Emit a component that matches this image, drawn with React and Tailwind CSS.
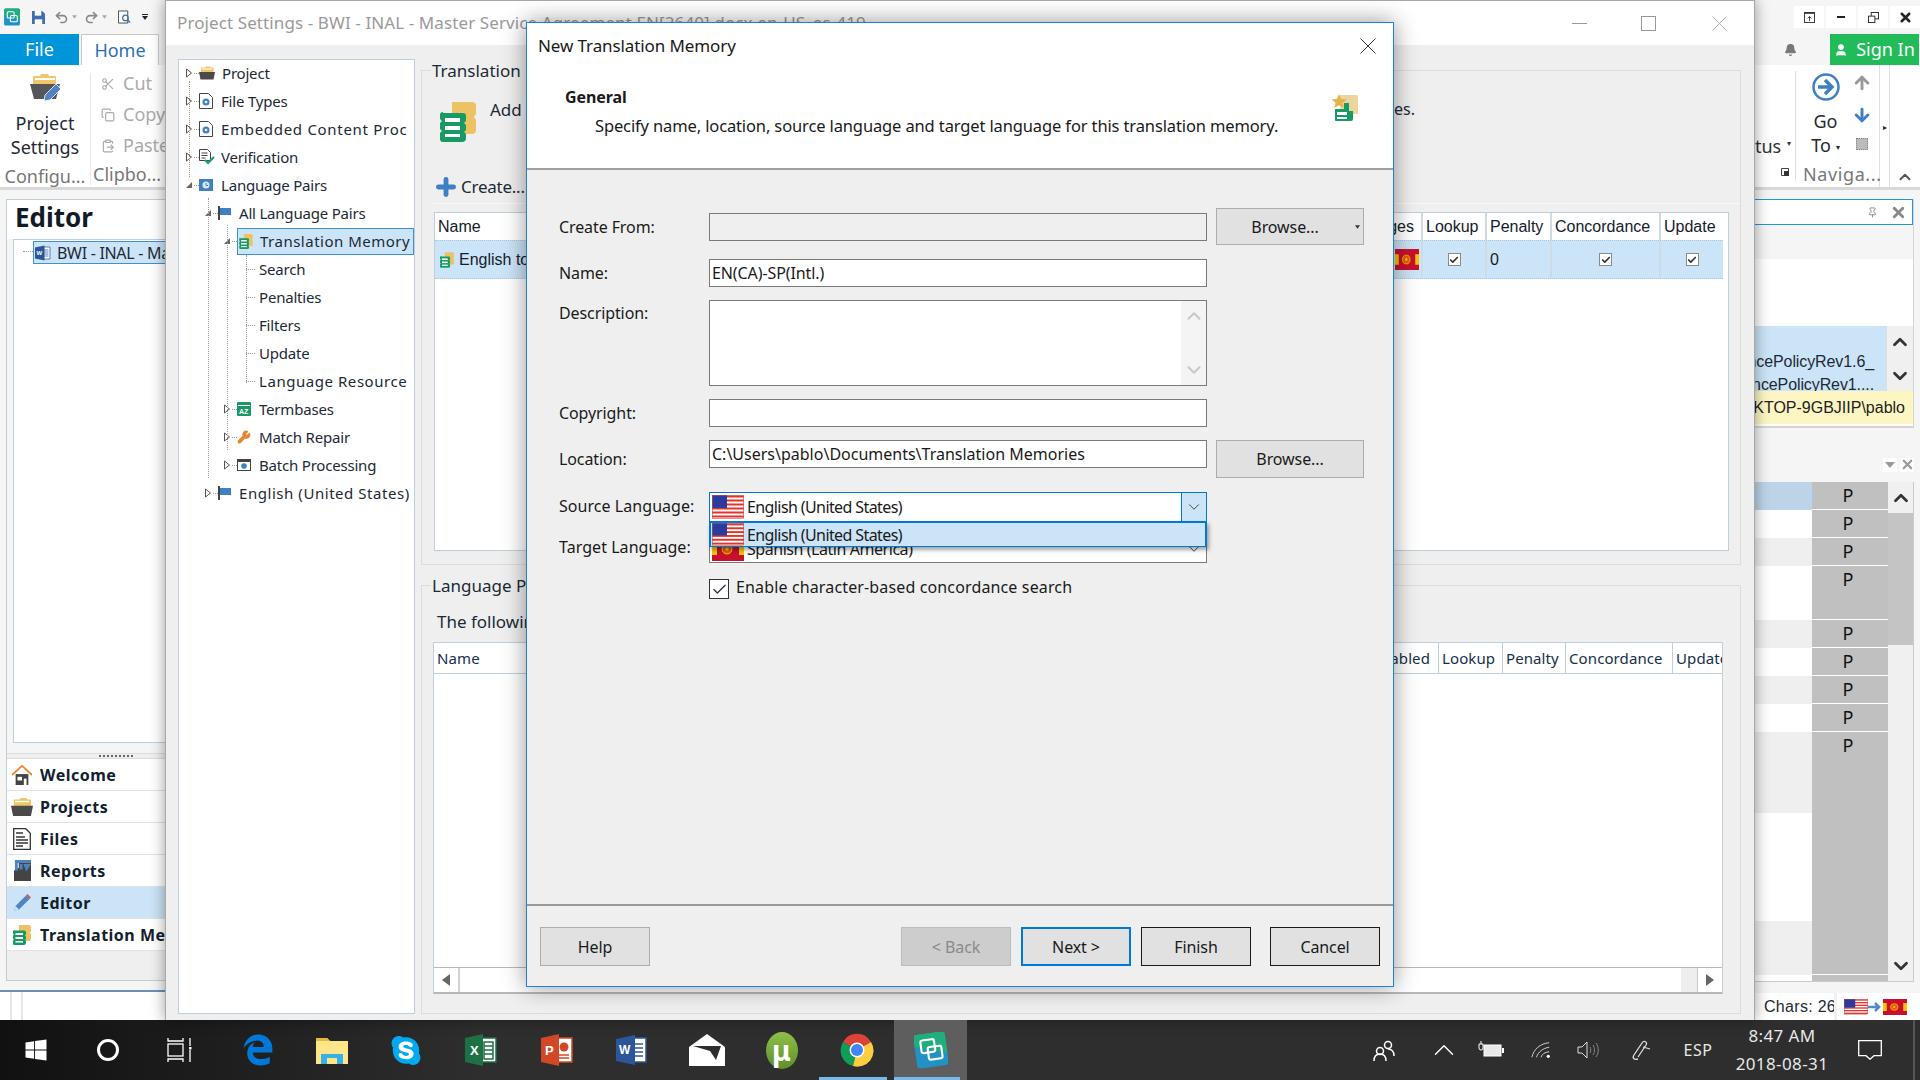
import { Scissors, Copy, ClipboardPaste, Plus, ChevronUp, ChevronDown, Pin, Bell, User, ArrowUp, ArrowDown, Check, Wrench, Undo2, Redo2, X } from 'lucide-react'
import { FaWindows, FaEdgeLegacy, FaSkype } from 'react-icons/fa'

const UsFlag = ({ className = 'w-[32px] h-[24px]' }) => (
  <svg viewBox="0 0 32 24" preserveAspectRatio="none" className={className}>
    <rect width="32" height="24" fill="#fff" />
    {[0, 4, 8, 12, 16, 20].map((y) => <rect key={y} y={y + 0.5} width="32" height="2" fill="#e6332a" />)}
    <rect width="15" height="13" fill="#2b3a9e" />
    <rect x="0.5" y="0.5" width="31" height="23" fill="none" stroke="#c05050" strokeWidth="0.6" />
  </svg>
)

const EsFlag = ({ className = 'w-[32px] h-[24px]' }) => (
  <svg viewBox="0 0 32 24" preserveAspectRatio="none" className={className}>
    <rect width="32" height="24" fill="#c8102e" />
    <rect x="27" y="6" width="5" height="12" fill="#f5c400" />
    <rect x="0" y="6" width="5" height="12" fill="#f5c400" />
    <circle cx="15" cy="12" r="5" fill="#e8590c" stroke="#f5c400" strokeWidth="1" />
    <circle cx="15" cy="12" r="1.6" fill="#f5c400" />
  </svg>
)

const TmIcon = ({ className = 'w-[16px] h-[16px]' }) => (
  <svg viewBox="0 0 36 40" className={className}>
    <path d="M12 0h20a4 4 0 0 1 4 4v8l-2 3 2 3v10a4 4 0 0 1-4 4H12z" fill="#edc264" />
    <path d="M3 11h20a3 3 0 0 1 3 3v5l-2 2 2 2v5l-2 2 2 2v4a4 4 0 0 1-4 4H3a3 3 0 0 1-3-3v-6l2-2-2-2v-6l2-2-2-2v-4a3 3 0 0 1 3-3z" fill="#179a63" />
    <rect x="5" y="16" width="15" height="4" fill="#fff" />
    <rect x="5" y="24" width="15" height="4" fill="#fff" />
    <rect x="5" y="32" width="15" height="3" fill="#fff" />
  </svg>
)

const NewTmIcon = () => (
  <svg viewBox="0 0 26 28" className="w-[26px] h-[28px]">
    <path d="M8 1h16a2 2 0 0 1 2 2v17H8z" fill="#ecd59a" />
    <path d="M7 0l2.200 5 5.300.4-4 3.500 1.300 5.200L7 11.300 2.200 14l1.300-5.200-4-3.500 5.300-.4z" fill="#e4b24c" />
    <path d="M12 9h5v8h4v8a2 2 0 0 1-2 2H4a1 1 0 0 1-1-1V15h9z" fill="#179a63" />
    <rect x="5" y="18" width="10" height="3" fill="#fff" />
    <rect x="5" y="23" width="10" height="2" fill="#fff" />
  </svg>
)

const FolderIcon = ({ className }) => (
  <svg viewBox="0 0 32 26" className={className}>
    <path d="M4 2h8l2-2h8l2 2h5v12H4z" fill="#f0c668" />
    <rect x="6" y="4" width="20" height="2" fill="#fff" />
    <path d="M0 11h32l-3 15H3z" fill="#4a4a4a" />
  </svg>
)

const ProjectIcon = ({ className }) => (
  <svg viewBox="0 0 30 30" className={className}>
    <path d="M3 3h7l1-2h7l1 2h7v12H3z" fill="#f0c668" />
    <rect x="5" y="5" width="20" height="2" fill="#fff" />
    <path d="M0 11h30l-4 15H4z" fill="#55555a" />
    <path d="M14 28l1-6 11-11 5 5-11 11z" fill="#4f83c3" stroke="#fff" strokeWidth="0.8" />
  </svg>
)

const PencilBlue = ({ className }) => (
  <svg viewBox="0 0 20 20" className={className}>
    <path d="M2 18l1.500-5L14 2.500 17.500 6 7 16.500z" fill="#4f83c3" />
    <path d="M14 2.500l1.500-1.500 3.500 3.500L17.500 6z" fill="#d9534f" />
    <path d="M3.500 13L7 16.500 2 18z" fill="#cfe0f2" />
  </svg>
)

const PageGear = ({ className = 'w-[14px] h-[16px]' }) => (
  <svg viewBox="0 0 14 16" className={className}>
    <path d="M.5.500h9l4 4v11H.5z" fill="#fff" stroke="#444" />
    <circle cx="7" cy="9" r="3.500" fill="#3f7fc4" />
    <circle cx="7" cy="9" r="1.300" fill="#fff" />
  </svg>
)

const VerifyIcon = () => (
  <svg viewBox="0 0 16 16" className="w-[16px] h-[16px]">
    <path d="M.5.500h8l3 3v8H.5z" fill="#fff" stroke="#444" />
    <path d="M2.500 4h6M2.500 6.500h6M2.500 9h4" stroke="#444" />
    <path d="M6 11l3 3 6-6" fill="none" stroke="#1aa06d" strokeWidth="2.200" />
  </svg>
)

const LangPairsIcon = () => (
  <svg viewBox="0 0 14 12" className="w-[14px] h-[12px]">
    <rect width="14" height="12" fill="#3f7fc4" />
    <circle cx="7" cy="6" r="3.500" fill="#dbe9f6" />
    <path d="M7 4v2.500h2" stroke="#3f7fc4" fill="none" />
  </svg>
)

const FlagPole = () => (
  <svg viewBox="0 0 14 14" className="w-[14px] h-[14px]">
    <rect x="0" y="0" width="2" height="14" fill="#444" />
    <path d="M2 2h11v7H2z" fill="#3f7fc4" />
  </svg>
)

const TermIcon = () => (
  <svg viewBox="0 0 14 14" className="w-[14px] h-[14px]">
    <rect width="14" height="14" rx="1" fill="#179a63" />
    <rect x="1" y="3" width="12" height="1" fill="#fff" />
    <text x="2" y="12" fontSize="7" fill="#fff" fontFamily="Liberation Sans" fontWeight="700">AZ</text>
  </svg>
)

const BatchIcon = () => (
  <svg viewBox="0 0 14 12" className="w-[14px] h-[12px]">
    <rect x=".5" y=".5" width="13" height="11" fill="#fff" stroke="#444" />
    <rect x=".5" y=".5" width="13" height="2.500" fill="#444" />
    <circle cx="7" cy="7" r="2.800" fill="#3f7fc4" />
  </svg>
)

const WordDoc = ({ className }) => (
  <svg viewBox="0 0 32 32" className={className}>
    <path d="M14 4h16v24H14z" fill="#fff" stroke="#2b579a" strokeWidth="1.500" />
    <path d="M18 10h9M18 14h9M18 18h9M18 22h9" stroke="#2b579a" strokeWidth="1.500" />
    <path d="M0 5l19-4v30L0 27z" fill="#2b579a" />
    <text x="3" y="20" fontSize="12" fontWeight="700" fill="#fff" fontFamily="Liberation Sans">W</text>
  </svg>
)

const StudioLogo = ({ className, tilt = false }) => (
  <svg viewBox="0 0 32 34" className={className}>
    <g transform={tilt ? 'rotate(-8 16 17)' : undefined}>
      <rect x="1" y="1" width="30" height="32" rx="3" fill="#2192c6" />
      <path d="M4 1h24a3 3 0 0 1 3 3v18L1 12V4a3 3 0 0 1 3-3z" fill="#1fae7c" />
      <rect x="7" y="7" width="13" height="12" rx="2" fill="none" stroke="#fff" strokeWidth="2" />
      <rect x="13" y="14" width="13" height="12" rx="2" fill="none" stroke="#fff" strokeWidth="2" />
    </g>
  </svg>
)

const Cross = ({ className, color = '#333' }) => (
  <svg viewBox="0 0 16 16" className={className}>
    <path d="M.5.500l15 15M15.500.500l-15 15" stroke={color} strokeWidth="1" />
  </svg>
)

const Exp = ({ open }) => (
  <svg viewBox="0 0 8 10" className="w-[8px] h-[10px] shrink-0">
    {open ? <path d="M7 2v6H1z" fill="#666" /> : <path d="M1.500 1l5 4-5 4z" fill="#fff" stroke="#555" />}
  </svg>
)

const treeRows = [
  { pad: 'pl-[6px]', exp: 'closed', icon: <FolderIcon className="w-[16px] h-[14px]" />, label: 'Project', gap: 'ml-[7px]' },
  { pad: 'pl-[6px]', exp: 'closed', icon: <PageGear />, label: 'File Types', gap: 'ml-[8px]' },
  { pad: 'pl-[6px]', exp: 'closed', icon: <PageGear />, label: 'Embedded Content Proc', gap: 'ml-[8px]', wide: 'tracking-[0.7px]' },
  { pad: 'pl-[6px]', exp: 'closed', icon: <VerifyIcon />, label: 'Verification', gap: 'ml-[6px]' },
  { pad: 'pl-[6px]', exp: 'open', icon: <LangPairsIcon />, label: 'Language Pairs', gap: 'ml-[8px]' },
  { pad: 'pl-[25px]', exp: 'open', icon: <FlagPole />, label: 'All Language Pairs', gap: 'ml-[7px]' },
  { pad: 'pl-[44px]', exp: 'open', icon: <TmIcon className="w-[14px] h-[15px]" />, label: 'Translation Memory', gap: 'ml-[7px]', selected: true, wide: 'tracking-[0.5px]' },
  { pad: 'pl-[63px]', label: 'Search' },
  { pad: 'pl-[63px]', label: 'Penalties' },
  { pad: 'pl-[63px]', label: 'Filters' },
  { pad: 'pl-[63px]', label: 'Update' },
  { pad: 'pl-[63px]', label: 'Language Resource', wide: 'tracking-[0.55px]' },
  { pad: 'pl-[44px]', exp: 'closed', icon: <TermIcon />, label: 'Termbases', gap: 'ml-[8px]' },
  { pad: 'pl-[44px]', exp: 'closed', icon: <Wrench className="w-[14px] h-[14px] text-[#e8862e] fill-[#e8862e]" />, label: 'Match Repair', gap: 'ml-[8px]' },
  { pad: 'pl-[44px]', exp: 'closed', icon: <BatchIcon />, label: 'Batch Processing', gap: 'ml-[8px]' },
  { pad: 'pl-[25px]', exp: 'closed', icon: <FlagPole />, label: 'English (United States)', gap: 'ml-[7px]', wide: 'tracking-[0.55px]' },
]

const TreeRow = ({ pad, exp, icon, label, gap, selected, wide = 'tracking-[-0.2px]' }) => {
  if (!exp) {
    return (
      <div className={`flex items-center h-[28px] ${pad} relative`}>
        <div className="absolute left-[67px] w-[9px] border-t border-dotted border-[#999]" />
        <span className={`ml-[17px] whitespace-nowrap ${wide}`}>{label}</span>
      </div>
    )
  }
  return (
    <div className={`flex items-center h-[28px] ${pad}`}>
      <Exp open={exp === 'open'} />
      <div className="w-[5px] ml-[1px] border-t border-dotted border-[#999]" />
      {selected ? (
        <div className="flex-1 flex items-center h-[27px] bg-[#cce4f7] border border-[#3d8fd6] pl-[1px]">
          {icon}
          <span className={`${gap} whitespace-nowrap ${wide}`}>{label}</span>
        </div>
      ) : (
        <>
          {icon}
          <span className={`${gap} whitespace-nowrap ${wide}`}>{label}</span>
        </>
      )}
    </div>
  )
}

const BlueCheck = () => (
  <div className="w-[13px] h-[13px] border border-[#8a8a8a] bg-white flex items-center justify-center">
    <Check className="w-[10px] h-[10px] text-[#333]" strokeWidth={4} />
  </div>
)

const TopCell = ({ w, children, center }) => (
  <div className={`${w} shrink-0 border-l-2 border-[#cfdbe3] flex items-center ${center ? 'justify-center' : 'pl-[3px]'}`}>{children}</div>
)

const BottomCell = ({ w, children }) => (
  <div className={`${w} shrink-0 border-l border-[#bfd0dc] pl-[3px] flex items-center overflow-hidden whitespace-nowrap`}>{children}</div>
)

const ProjectSettings = () => (
  <div className="absolute left-[165px] top-0 w-[1590px] h-[1020px] flex flex-col border-l border-t border-r border-[#a8a8a8] bg-[#efefef] shadow-[0_0_14px_rgba(0,0,0,0.4)] text-[#1d2a35]">
    <div className="h-[44px] shrink-0 bg-white flex items-center justify-between pl-[11px] pr-[27px]">
      <span className="text-[17px] tracking-[0.1px] text-[#9a9a9a] whitespace-nowrap">Project Settings - BWI - INAL - Master Service Agreement EN[2640].docx.en-US_es-419</span>
      <div className="flex items-center">
        <div className="w-[15px] border-t border-[#999]" />
        <div className="w-[15px] h-[15px] border border-[#999] ml-[54px]" />
        <Cross className="w-[15px] h-[15px] ml-[56px]" color="#aaa" />
      </div>
    </div>
    <div className="flex-1 flex pl-[12px] pt-[14px] pb-[6px] pr-[13px] gap-[6px]">
      <div className="relative w-[237px] h-[955px] bg-white border border-[#bfd0dc] text-[15px] overflow-hidden">
        <div className="absolute left-[10px] top-[21px] h-[96px] border-l border-dotted border-[#999]" />
        <div className="absolute left-[29px] top-[138px] h-[280px] border-l border-dotted border-[#999]" />
        <div className="absolute left-[48px] top-[165px] h-[225px] border-l border-dotted border-[#999]" />
        <div className="absolute left-[67px] top-[195px] h-[128px] border-l border-dotted border-[#999]" />
        <div className="-mt-[1px]">
          {treeRows.map((r) => <TreeRow key={r.label} {...r} />)}
        </div>
      </div>
      <div className="flex-1 flex flex-col gap-[20px]">
        <div className="relative h-[495px] mt-[11px] border border-[#dcdcdc]">
          <span className="absolute left-[9px] -top-[13px] px-[1px] bg-[#efefef] text-[17px] whitespace-nowrap">Translation Memory</span>
          <div className="flex items-start pt-[31px] pl-[18px]">
            <TmIcon className="w-[36px] h-[40px]" />
            <span className="ml-[14px] -mt-[5px] text-[17px]">Add</span>
            <span className="absolute left-[972px] top-[26px] text-[16px]">es.</span>
          </div>
          <div className="flex items-center h-[34px] ml-[11px] mt-[28px] border-b border-[#f8f8f8]">
            <Plus className="w-[26px] h-[26px] text-[#3f7fc4]" strokeWidth={4.5} />
            <span className="ml-[2px] text-[17px] tracking-[-0.25px]">Create...</span>
          </div>
          <div className="ml-[12px] mr-[11px] mt-[8px] h-[339px] bg-white border border-[#bfd0dc] font-['Liberation_Sans',Arial,sans-serif] text-[16px] text-[#14202b]">
            <div className="h-[27px] flex">
              <div className="w-[986px] pl-[3px] flex items-center justify-between whitespace-nowrap">
                <span>Name</span>
                <span className="pr-[7px]">Languages</span>
              </div>
              <TopCell w="w-[64px]">Lookup</TopCell>
              <TopCell w="w-[65px]">Penalty</TopCell>
              <TopCell w="w-[109px]">Concordance</TopCell>
              <TopCell w="w-[64px]">Update</TopCell>
            </div>
            <div className="h-[39px] w-[1288px] flex bg-[#cce4f7] border-t border-b border-dotted border-[#a8c8e0]">
              <div className="w-[986px] pl-[5px] flex items-center justify-between pr-[2px]">
                <div className="flex items-center gap-[5px]">
                  <TmIcon className="w-[14px] h-[16px]" />
                  <span>English to Spanish</span>
                </div>
                <EsFlag className="w-[24px] h-[21px]" />
              </div>
              <TopCell w="w-[64px]" center><BlueCheck /></TopCell>
              <TopCell w="w-[65px]">0</TopCell>
              <TopCell w="w-[109px]" center><BlueCheck /></TopCell>
              <TopCell w="w-[64px]" center><BlueCheck /></TopCell>
            </div>
          </div>
        </div>
        <div className="relative flex-1 border border-[#dcdcdc]">
          <span className="absolute left-[9px] -top-[13px] px-[1px] bg-[#efefef] text-[17px] whitespace-nowrap">Language Pairs</span>
          <div className="pl-[15px] pt-[23px] text-[17px] h-[56px] whitespace-nowrap">The following</div>
          <div className="ml-[11px] mr-[17px] h-[352px] bg-white border border-[#bfd0dc] border-b-2 border-b-[#b8b8b8] flex flex-col text-[15px] tracking-[0.1px] text-[#14304a]">
            <div className="h-[31px] flex border-b border-[#bfd0dc]">
              <div className="w-[1004px] pl-[3px] flex items-center justify-between">
                <span>Name</span>
                <span className="pr-[8px]">Enabled</span>
              </div>
              <BottomCell w="w-[64px]">Lookup</BottomCell>
              <BottomCell w="w-[63px]">Penalty</BottomCell>
              <BottomCell w="w-[107px]">Concordance</BottomCell>
              <BottomCell w="w-[50px]">Update</BottomCell>
            </div>
            <div className="flex-1" />
            <div className="h-[25px] flex border-t border-[#b8b8b8]">
              <div className="w-[26px] border-r-2 border-[#d0d0d0] flex items-center justify-center">
                <svg viewBox="0 0 8 12" className="w-[8px] h-[12px]"><path d="M8 0v12L0 6z" fill="#666" /></svg>
              </div>
              <div className="flex-1" />
              <div className="w-[16px] bg-[#eee]" />
              <div className="w-[25px] border-l border-[#c8c8c8] flex items-center justify-center">
                <svg viewBox="0 0 8 12" className="w-[8px] h-[12px]"><path d="M0 0v12l8-6z" fill="#666" /></svg>
              </div>
            </div>
          </div>
        </div>
      </div>
    </div>
  </div>
)

const Field = ({ className = 'bg-white', children, h = 'h-[28px]' }) => (
  <div className={`w-[498px] ${h} shrink-0 border border-[#7a7a7a] ${className} flex items-center px-[2px] whitespace-nowrap`}>{children}</div>
)

const Label = ({ children, className = 'self-center' }) => (
  <span className={`w-[150px] shrink-0 ${className} whitespace-nowrap`}>{children}</span>
)

const Btn = ({ className = 'border-[#adadad]', children }) => (
  <div className={`w-[110px] h-[39px] bg-[#e1e1e1] border flex items-center justify-center ${className}`}>{children}</div>
)

const Dialog = () => (
  <div className="absolute left-[526px] top-[22px] w-[868px] h-[965px] flex flex-col bg-[#efefef] border border-[#1a82d8] shadow-[0_0_22px_rgba(0,0,0,0.42)] text-[16px] tracking-[-0.1px] text-[#1a1a1a]">
    <div className="h-[147px] shrink-0 bg-white border-b-2 border-[#a0a0a0] relative">
      <div className="flex items-center justify-between pl-[11px] pr-[17px] pt-[12px] h-[34px]">
        <span className="text-[17px]">New Translation Memory</span>
        <Cross className="w-[16px] h-[16px]" />
      </div>
      <div className="pl-[38px] pt-[28px] font-bold">General</div>
      <div className="pl-[68px] pt-[5px] text-[16.5px] tracking-[-0.13px] whitespace-nowrap">Specify name, location, source language and target language for this translation memory.</div>
      <div className="absolute right-[35px] top-[71px]"><NewTmIcon /></div>
    </div>
    <div className="pl-[32px] pt-[38px] flex flex-col">
      <div className="flex items-center h-[37px]">
        <Label>Create From:</Label>
        <Field className="bg-[#efefef]" />
        <div className="relative w-[148px] h-[37px] ml-[9px] pr-[10px] bg-[#e1e1e1] border border-[#adadad] flex items-center justify-center">
          Browse...
          <svg viewBox="0 0 6 4" className="absolute right-[3px] w-[5px] h-[4px]"><path d="M0 0h6L3 4z" fill="#333" /></svg>
        </div>
      </div>
      <div className="flex mt-[14px]"><Label>Name:</Label><Field>EN(CA)-SP(Intl.)</Field></div>
      <div className="flex mt-[13px]">
        <Label className="pt-[1px]">Description:</Label>
        <Field h="h-[86px]" className="bg-white justify-end !px-0">
          <div className="w-[25px] h-[84px] bg-[#f4f4f4] flex flex-col items-center justify-between py-[4px] text-[#c8c8c8]">
            <ChevronUp className="w-[22px] h-[22px]" strokeWidth={2.2} />
            <ChevronDown className="w-[22px] h-[22px]" strokeWidth={2.2} />
          </div>
        </Field>
      </div>
      <div className="flex mt-[13px]"><Label>Copyright:</Label><Field /></div>
      <div className="flex mt-[13px] h-[38px]">
        <Label className="self-end pb-[7px]">Location:</Label>
        <Field><span className="tracking-[0px]">C:\Users\pablo\Documents\Translation Memories</span></Field>
        <div className="w-[148px] h-[38px] ml-[9px] bg-[#e1e1e1] border border-[#adadad] flex items-center justify-center">Browse...</div>
      </div>
      <div className="flex mt-[14px] relative z-10">
        <Label className="self-center -mt-[2px] tracking-[0.05px]">Source Language:</Label>
        <div className="relative w-[498px] h-[30px] bg-white border border-[#0078d7] flex items-center pl-[2px]">
          <UsFlag className="w-[32px] h-[24px]" />
          <span className="ml-[3px] tracking-[-0.6px]">English (United States)</span>
          <div className="absolute right-0 top-0 h-full w-[25px] bg-[#cce4f7] border-l border-[#0078d7] flex items-center justify-center">
            <ChevronDown className="w-[18px] h-[18px] text-[#333]" strokeWidth={1.2} />
          </div>
          <div className="absolute -left-px top-[28px] w-[498px] h-[26px] bg-[#cce4f7] border-2 border-[#0078d7] border-b-[1px] flex items-center pl-[1px] shadow-[2px_3px_4px_rgba(0,0,0,0.35)]">
            <UsFlag className="w-[32px] h-[23px]" />
            <span className="ml-[3px] tracking-[-0.6px]">English (United States)</span>
          </div>
        </div>
      </div>
      <div className="flex mt-[12px]">
        <Label className="self-start mt-[1px] tracking-[0.05px]">Target Language:</Label>
        <div className="relative w-[498px] h-[29px] bg-white border border-[#7a7a7a] flex items-center pl-[2px] overflow-hidden">
          <EsFlag className="w-[32px] h-[24px]" />
          <span className="ml-[3px] tracking-[-0.45px]">Spanish (Latin America)</span>
          <ChevronDown className="absolute right-[3px] w-[18px] h-[18px] text-[#333]" strokeWidth={1.2} />
        </div>
      </div>
      <div className="flex items-center mt-[16px]">
        <span className="w-[150px] shrink-0" />
        <div className="w-[20px] h-[20px] bg-white border border-[#333] flex items-center justify-center">
          <Check className="w-[17px] h-[17px] text-[#333]" strokeWidth={1.8} />
        </div>
        <span className="ml-[7px] -mt-[4px] tracking-[0.14px]">Enable character-based concordance search</span>
      </div>
    </div>
    <div className="flex-1" />
    <div className="h-[82px] shrink-0 border-t-2 border-[#999] flex items-start pt-[21px] pl-[13px] pr-[13px]">
      <Btn>Help</Btn>
      <div className="flex-1" />
      <Btn className="border-[#bdbdbd] !bg-[#cdcdcd] text-[#8a8a8a]">&lt; Back</Btn>
      <Btn className="ml-[10px] border-2 !border-[#0078d7]">Next &gt;</Btn>
      <Btn className="ml-[10px]">Finish</Btn>
      <Btn className="ml-[19px]">Cancel</Btn>
    </div>
  </div>
)

const navRows = [
  { label: 'Welcome', icon: (
    <svg viewBox="0 0 22 22" className="w-[20px] h-[20px]"><path d="M4 10h14v12H4z" fill="#444" /><rect x="6" y="13" width="5" height="4" fill="#fff" /><rect x="13" y="15" width="3" height="7" fill="#fff" /><path d="M0 11L11 1l11 10" fill="none" stroke="#e8862e" strokeWidth="2" /></svg>
  ) },
  { label: 'Projects', icon: <FolderIcon className="w-[22px] h-[18px]" /> },
  { label: 'Files', icon: (
    <svg viewBox="0 0 18 22" className="w-[18px] h-[22px]"><path d="M.7.700h12l4.600 4.600v16H.7z" fill="#fff" stroke="#333" strokeWidth="1.300" /><path d="M3 5h7M3 9h9M3 12h12M3 15h12M3 18h7" stroke="#333" strokeWidth="1.300" /></svg>
  ) },
  { label: 'Reports', icon: (
    <svg viewBox="0 0 18 22" className="w-[17px] h-[21px]"><path d="M0 22V11l5-3V0h13v22z" fill="#444" /><path d="M1 0h17v3H4v8H1zM6 4h3v6H6z" fill="#4f83c3" /><path d="M10 4h8l-5 8z" fill="#4f83c3" /></svg>
  ) },
  { label: 'Editor', active: true, icon: <PencilBlue className="w-[20px] h-[20px]" /> },
  { label: 'Translation Memories', icon: <TmIcon className="w-[18px] h-[20px]" /> },
]

const pSegs = ['h-[28px]', 'h-[28px]', 'h-[28px]', 'h-[54px]', 'h-[28px]', 'h-[28px]', 'h-[28px]', 'h-[28px]', 'h-[243px]']
const leftSegs = [
  ['h-[28px]', 'bg-[#bdd4e8]'], ['h-[28px]', 'bg-white'], ['h-[28px]', 'bg-[#efefef]'], ['h-[54px]', 'bg-white'],
  ['h-[28px]', 'bg-[#efefef]'], ['h-[28px]', 'bg-white'], ['h-[28px]', 'bg-[#efefef]'], ['h-[28px]', 'bg-white'],
  ['h-[81px]', 'bg-[#efefef]'], ['h-[108px]', 'bg-white'], ['h-[54px]', 'bg-[#efefef]'], ['h-[6px]', 'bg-white'],
]

const Caret = () => <svg viewBox="0 0 6 4" className="w-[5px] h-[4px]"><path d="M0 0h6L3 4z" fill="#aaa" /></svg>

const Back = () => (
  <div className="h-[1020px] flex flex-col bg-[#f5f5f5]">
    <div className="h-[34px] flex justify-between">
      <div className="flex items-center pl-[3px]">
        <StudioLogo className="w-[18px] h-[18px]" />
        <svg viewBox="0 0 14 14" className="w-[13px] h-[13px] ml-[11px]"><path d="M0 0h11l3 3v11H0z" fill="#3f6fb0" /><rect x="3" y="0" width="7" height="5" fill="#fff" /><rect x="3" y="9" width="8" height="5" fill="#fff" /></svg>
        <Undo2 className="w-[15px] h-[15px] text-[#888] ml-[9px]" strokeWidth={2.6} />
        <div className="ml-[3px]"><Caret /></div>
        <Redo2 className="w-[15px] h-[15px] text-[#888] ml-[7px]" strokeWidth={2.6} />
        <div className="ml-[3px]"><Caret /></div>
        <svg viewBox="0 0 14 14" className="w-[13px] h-[14px] ml-[11px]"><path d="M.5.500h10v13H.5z" fill="#fff" stroke="#444" /><circle cx="8" cy="8" r="3" fill="none" stroke="#3f6fb0" strokeWidth="1.300" /><path d="M10 10l3 3" stroke="#3f6fb0" strokeWidth="1.500" /></svg>
        <svg viewBox="0 0 6 6" className="w-[6px] h-[6px] ml-[11px]"><path d="M0 0h6v1H0zM0 2h6L3 6z" fill="#222" /></svg>
      </div>
      <div className="flex items-center gap-[2px]">
        {[
          <svg key="a" viewBox="0 0 12 12" className="w-[11px] h-[11px]"><rect x=".5" y=".5" width="11" height="11" fill="none" stroke="#333" /><rect width="12" height="2" fill="#333" /><path d="M6 10V5M4 7l2-2 2 2" stroke="#333" fill="none" /></svg>,
          <div key="b" className="w-[8px] h-[2px] bg-[#222]" />,
          <svg key="c" viewBox="0 0 12 12" className="w-[11px] h-[11px]"><rect x="3.500" y=".5" width="8" height="7" fill="none" stroke="#222" /><rect x=".5" y="4.500" width="7" height="7" fill="#fff" stroke="#222" /></svg>,
          <X key="d" className="w-[15px] h-[15px] text-[#222]" strokeWidth={4} />,
        ].map((el, i) => (
          <div key={i} className="w-[30px] h-[22px] bg-white flex items-center justify-center">{el}</div>
        ))}
      </div>
    </div>
    <div className="h-[31px] flex items-stretch justify-between">
      <div className="flex">
        <div className="w-[79px] bg-[#0095d9] text-white text-[18px] flex items-center justify-center">File</div>
        <div className="w-[78px] ml-[2px] bg-white border-t border-x border-[#c8c8c8] text-[#2b6fb3] text-[18px] flex items-center justify-center">Home</div>
      </div>
      <div className="flex items-center">
        <Bell className="w-[13px] h-[14px] text-[#777] fill-[#777] mr-[33px]" />
        <div className="w-[89px] h-full bg-[#22bb5a] text-white text-[18px] flex items-center justify-center gap-[8px] mr-px">
          <User className="w-[14px] h-[16px] fill-white" strokeWidth={2} />
          Sign In
        </div>
      </div>
    </div>
    <div className="h-[125px] flex justify-between bg-white border-b-[3px] border-[#d8d8d8] text-[18px] overflow-hidden">
      <div className="flex text-[#444]">
        <div className="w-[91px] flex flex-col items-center border-r border-[#e8e8e8] mt-[8px] mb-[2px]">
          <ProjectIcon className="w-[30px] h-[30px] shrink-0" />
          <span className="mt-[8px] leading-[24px] text-center text-[#1f2a33]">Project Settings</span>
          <span className="text-[#777] mt-[5px] leading-[24px]">Configu...</span>
        </div>
        <div className="pl-[10px] flex flex-col text-[#aaa]">
          <div className="flex items-center h-[31px] mt-[3px] gap-[8px]"><Scissors className="w-[14px] h-[14px]" />Cut</div>
          <div className="flex items-center h-[31px] gap-[8px]"><Copy className="w-[14px] h-[14px]" />Copy</div>
          <div className="flex items-center h-[31px] gap-[8px]"><ClipboardPaste className="w-[14px] h-[14px]" />Paste</div>
          <span className="text-[#777] mt-[1px] -ml-[8px] leading-[24px]">Clipbo...</span>
        </div>
      </div>
      <div className="w-[165px] shrink-0 flex relative">
        <div className="w-[41px] pt-[62px] border-r border-[#e0e0e0] my-[6px] text-[#333] flex items-start whitespace-nowrap overflow-hidden">
          <span>tus</span>
          <span className="text-[8px] ml-[6px] mt-[4px]">▾</span>
        </div>
        <div className="w-[83px] flex flex-col relative">
          <div className="flex">
            <div className="w-[56px] pl-[3px] flex flex-col items-center">
              <svg viewBox="0 0 28 28" className="w-[28px] h-[28px] mt-[8px]"><circle cx="14" cy="14" r="12.500" fill="#fff" stroke="#3f7fc4" strokeWidth="2.500" /><path d="M6 14h13M13 7l7 7-7 7" fill="none" stroke="#3f7fc4" strokeWidth="3.500" /></svg>
              <span className="mt-[8px] leading-[24px] text-[#1f2a33]">Go</span>
              <span className="leading-[24px] text-[#1f2a33]">To <span className="text-[8px] align-middle">▾</span></span>
            </div>
            <div className="flex flex-col items-center gap-[12px] pt-[8px] w-[20px]">
              <ArrowUp className="w-[20px] h-[20px] text-[#999] shrink-0" strokeWidth={3.5} />
              <ArrowDown className="w-[20px] h-[20px] text-[#3f7fc4] shrink-0" strokeWidth={3.5} />
              <div className="w-[12px] h-[12px] mt-[1px] border border-dotted border-[#888] bg-[#bbb]" />
            </div>
          </div>
          <span className="text-[#777] pl-[7px] mt-[3px] leading-[24px] tracking-[0.6px]">Naviga...</span>
        </div>
        <div className="w-[11px] border-x border-[#e0e0e0] flex items-center justify-center text-[8px] text-[#222] pt-[2px]">▸</div>
        <div className="flex-1 flex items-end justify-center pb-[1px]"><ChevronUp className="w-[18px] h-[18px] text-[#555]" strokeWidth={2.5} /></div>
        <svg viewBox="0 0 8 8" className="absolute left-[26px] bottom-[11px] w-[8px] h-[8px]"><path d="M.5.500h7v7h-7z" fill="none" stroke="#444" /><path d="M3 3h5v5H3z" fill="#333" /></svg>
      </div>
    </div>
    <div className="flex-1 flex justify-between">
      <div className="w-[165px] flex flex-col pl-[6px] pt-[9px]">
        <div className="flex-1 flex flex-col border-l border-t border-[#c0ced8] bg-[#f5f5f5]">
          <div className="h-[39px] pl-[8px] pb-[4px] flex items-center text-[26px] font-bold text-[#0f1c28] bg-white">Editor</div>
          <div className="h-[504px] ml-[6px] bg-white border-l border-t border-b border-[#bccfdc] pt-[1px] flex overflow-hidden">
            <div className="w-[10px] shrink-0 h-0 mt-[10px] ml-[9px] border-t border-dotted border-[#999]" />
            <div className="w-[140px] shrink-0 h-[23px] bg-[#cce4f7] border border-[#3d8fd6] flex items-center pl-[1px] text-[16px] tracking-[-0.3px] whitespace-nowrap text-[#1d2a35]">
              <WordDoc className="w-[16px] h-[16px] shrink-0" />
              <span className="ml-[6px]">BWI - INAL - Master</span>
            </div>
          </div>
          <div className="h-[10px]" />
          <div className="h-[6px] border-y border-[#dcdcdc] bg-[#efefef] flex justify-end pr-[32px] items-center">
            <div className="w-[34px] border-t-2 border-dotted border-[#666]" />
          </div>
          <div className="bg-white">
            {navRows.map((n) => (
              <div key={n.label} className={`h-[32px] flex items-center border-b border-[#e2e2e2] ${n.active ? 'bg-[#cce4f7]' : 'bg-white'} font-bold text-[16px] text-[#12202e] whitespace-nowrap overflow-hidden`}>
                <div className="w-[26px] pl-[4px] flex justify-center shrink-0">{n.icon}</div>
                <span className="ml-[7px] tracking-[0.5px]">{n.label}</span>
              </div>
            ))}
          </div>
          <div className="flex-1 bg-[#efefef] border-b border-[#c0ced8]" />
        </div>
        <div className="h-[9px]" />
        <div className="-ml-[6px] h-[30px] border-t-2 border-[#6c8fb8] bg-white flex">
          <div className="w-[10px]" />
          <div className="w-[2px] bg-[#e6e6e6]" />
          <div className="w-[9px]" />
          <div className="w-[2px] bg-[#e6e6e6]" />
        </div>
      </div>
      <div className="w-[165px] flex flex-col">
        <div className="h-[9px] shrink-0" />
        <div className="w-[159px] h-[229px] shrink-0 flex flex-col border-r border-b-2 border-[#d4d4d4] bg-white overflow-hidden">
          <div className="h-[26px] shrink-0 bg-white border-y border-r border-[#1c9ad6] flex items-center justify-end pr-[5px] gap-[12px]">
            <Pin className="w-[11px] h-[13px] text-[#888]" />
            <X className="w-[17px] h-[17px] text-[#888]" strokeWidth={4} />
          </div>
          <div className="h-[34px] shrink-0 bg-[#f5f5f5]" />
          <div className="h-[67px] shrink-0" />
          <div className="h-[65px] flex shrink-0 overflow-hidden">
            <div className="w-[131px] bg-[#cce4f7] font-['Liberation_Sans',Arial,sans-serif] text-[16px] tracking-[-0.1px] text-[#1d2a35] pt-[24px] leading-[23px] whitespace-nowrap overflow-hidden flex flex-col items-end pr-[12px]">
              <div>CompliancePolicyRev1.6_</div>
              <div>CompliancePolicyRev1....</div>
            </div>
            <div className="flex-1 flex flex-col items-center justify-center gap-[12px] bg-[#f0f0f0] border-l border-[#ddd] text-[#333]">
              <ChevronUp className="w-[22px] h-[22px]" strokeWidth={3} />
              <ChevronDown className="w-[22px] h-[22px]" strokeWidth={3} />
            </div>
          </div>
          <div className="h-[33px] shrink-0 bg-[#fdf6c3] font-['Liberation_Sans',Arial,sans-serif] text-[16px] text-[#222] flex items-center justify-end pr-[8px] whitespace-nowrap overflow-hidden">DESKTOP-9GBJIIP\pablo</div>
        </div>
        <div className="h-[27px] shrink-0 flex items-center justify-end gap-[3px] pr-[6px] mt-[23px] mb-[4px]">
          <div className="w-[14px] h-[14px] bg-white flex items-center justify-center">
            <svg viewBox="0 0 10 6" className="w-[10px] h-[6px]"><path d="M0 0h10L5 6z" fill="#999" /></svg>
          </div>
          <div className="w-[14px] h-[14px] bg-white flex items-center justify-center"><X className="w-[15px] h-[15px] shrink-0 text-[#999]" strokeWidth={3.5} /></div>
        </div>
        <div className="w-[159px] h-[500px] shrink-0 flex border-r border-b border-[#c0ced8] overflow-hidden">
          <div className="w-[57px] shrink-0">
            {leftSegs.map(([h, bg], i) => <div key={i} className={`${h} ${bg}`} />)}
          </div>
          <div className="w-[76px] shrink-0 bg-[#c0c0c0]">
            {pSegs.map((h, i) => (
              <div key={i} className={`${h} border-b border-white pr-[4px] text-center text-[18px] leading-[27px] text-[#111]`}>P</div>
            ))}
          </div>
          <div className="flex-1 bg-[#f0f0f0] flex flex-col items-center relative">
            <ChevronUp className="w-[22px] h-[22px] mt-[5px] text-[#333] shrink-0" strokeWidth={3} />
            <div className="w-full h-[132px] mt-[4px] bg-[#c4c4c4]" />
            <ChevronDown className="absolute bottom-[4px] w-[22px] h-[22px] text-[#333]" strokeWidth={3} />
          </div>
        </div>
        <div className="flex-1 flex bg-white items-center mt-[11px]">
          <div className="w-[79px] pl-[9px] font-['Liberation_Sans',Arial,sans-serif] text-[16px] text-[#1d2a35] whitespace-nowrap tracking-[0.3px]">Chars: 26</div>
          <div className="w-[3px] h-full bg-[#f0f0f0]" />
          <div className="flex items-center ml-[7px]">
            <UsFlag className="w-[24px] h-[16px]" />
            <svg viewBox="0 0 14 10" className="w-[14px] h-[10px]"><path d="M0 5h11M7 1l4 4-4 4" fill="none" stroke="#4f8ac9" strokeWidth="2.500" /></svg>
            <EsFlag className="w-[24px] h-[16px] ml-[1px]" />
          </div>
        </div>
      </div>
    </div>
  </div>
)

const TaskIcon = ({ w, active, underline, children, className = '' }) => (
  <div className={`relative ${w} ${className} h-full flex items-center justify-center shrink-0 ${active ? 'bg-[#5e5e5e]' : ''}`}>
    {children}
    {underline && <div className="absolute bottom-0 left-0 right-[7px] h-[3px] bg-[#76b9ed]" />}
  </div>
)

const Taskbar = () => (
  <div className="h-[60px] flex items-center justify-between bg-gradient-to-r from-[#111] via-[#2e2e2e] via-[25%] to-[#2e2e2e] text-[#e8e8e8]">
    <div className="flex items-center h-full">
      <TaskIcon w="w-[72px]"><FaWindows className="w-[24px] h-[24px] text-white" /></TaskIcon>
      <TaskIcon w="w-[72px]"><div className="w-[22px] h-[22px] rounded-full border-[3px] border-white" /></TaskIcon>
      <TaskIcon w="w-[72px]">
        <svg viewBox="0 0 26 24" className="w-[26px] h-[24px]"><g fill="none" stroke="#fff" strokeWidth="1.300"><path d="M1 0v3h15V0M1 24v-3h15v3" /><rect x="1" y="6" width="15" height="12" /><path d="M23 0v8M23 12v12" /></g><rect x="22" y="9" width="2.500" height="2.500" fill="#fff" /></svg>
      </TaskIcon>
      <TaskIcon w="w-[74px]" className="ml-[5px]"><FaEdgeLegacy className="w-[32px] h-[32px] text-[#0078d7]" /></TaskIcon>
      <TaskIcon w="w-[74px]">
        <svg viewBox="0 0 32 28" className="w-[32px] h-[28px]"><path d="M0 2h11l3 3h18v23H0z" fill="#fde58a" /><path d="M0 2h11l3 3H0z" fill="#e8b83a" /><path d="M5 28V18h22v10h-6v-6h-10v6z" fill="#35b0e8" /></svg>
      </TaskIcon>
      <TaskIcon w="w-[74px]">
        <div className="relative w-[32px] h-[32px] flex items-center justify-center">
          <div className="absolute w-[24px] h-[24px] rounded-full bg-white" />
          <FaSkype className="relative w-[33px] h-[33px] text-[#00a9f0]" />
        </div>
      </TaskIcon>
      <TaskIcon w="w-[76px]">
        <svg viewBox="0 0 32 32" className="w-[32px] h-[32px]"><path d="M14 4h17v24H14z" fill="#fff" stroke="#1e7145" strokeWidth="1.500" /><path d="M19 8h9v17h-9z M19 12h9M19 16h9M19 20h9" fill="none" stroke="#1e7145" strokeWidth="1.500" /><path d="M0 4l18-4v32L0 28z" fill="#1e7145" /><text x="5" y="21" fontSize="13" fontWeight="700" fill="#fff" fontFamily="Liberation Sans">X</text></svg>
      </TaskIcon>
      <TaskIcon w="w-[75px]">
        <svg viewBox="0 0 32 32" className="w-[32px] h-[32px]"><path d="M14 4h17v24H14z" fill="#fff" stroke="#d24726" strokeWidth="1.500" /><circle cx="23" cy="13" r="4.500" fill="#d24726" /><path d="M18 21h10M18 24h10" stroke="#d24726" strokeWidth="1.500" /><path d="M0 4l18-4v32L0 28z" fill="#d24726" /><text x="4" y="21" fontSize="13" fontWeight="700" fill="#fff" fontFamily="Liberation Sans">P</text></svg>
      </TaskIcon>
      <TaskIcon w="w-[75px]"><WordDoc className="w-[32px] h-[32px]" /></TaskIcon>
      <TaskIcon w="w-[75px]">
        <svg viewBox="0 0 36 32" className="w-[36px] h-[32px]"><path d="M18 0L0 13v19h36V13z" fill="#fff" /><path d="M4 12l28 0-5 14-6-9z" fill="#2e2e2e" /></svg>
      </TaskIcon>
      <TaskIcon w="w-[75px]">
        <div className="w-[32px] h-[37px] rounded-[50%] bg-gradient-to-b from-[#8fc04a] to-[#5e8f2a] flex items-center justify-center text-white font-bold text-[28px] leading-none">μ</div>
      </TaskIcon>
      <TaskIcon w="w-[75px]" underline>
        <svg viewBox="0 0 34 34" className="w-[34px] h-[34px]">
          <path d="M17 17L3 9a16 16 0 0 1 28 0z" fill="#db4437" />
          <path d="M17 17L3 9a16 16 0 0 0 10 24z" fill="#0f9d58" />
          <path d="M17 17l14-8a16 16 0 0 1-18 24z" fill="#ffcd40" />
          <circle cx="17" cy="17" r="7.500" fill="#fff" /><circle cx="17" cy="17" r="6" fill="#4285f4" />
        </svg>
      </TaskIcon>
      <TaskIcon w="w-[73px]" active underline><StudioLogo tilt className="w-[34px] h-[36px]" /></TaskIcon>
    </div>
    <div className="flex items-center h-full">
      <div className="w-[60px] flex justify-center"><svg viewBox="0 0 22 22" className="w-[22px] h-[22px]"><g fill="none" stroke="#fff" strokeWidth="1.500"><circle cx="7" cy="12" r="3.500" /><circle cx="15" cy="6" r="3.500" /><path d="M1 22c0-5 2-7 6-7s6 2 6 7M15 10c3 0 6 2 6 7" /></g></svg></div>
      <div className="w-[60px] flex justify-center"><ChevronUp className="w-[34px] h-[34px] text-white" strokeWidth={1} /></div>
      <div className="w-[34px] flex justify-center"><svg viewBox="0 0 26 18" className="w-[26px] h-[18px] shrink-0"><path d="M1 3h4v4a2 2 0 0 1-4 0zM3 0v3" fill="none" stroke="#fff" /><rect x="6" y="4" width="17" height="11" fill="#e8e8e8" stroke="#fff" /><rect x="24" y="7" width="2" height="5" fill="#fff" /></svg></div>
      <div className="w-[66px] flex justify-center"><svg viewBox="0 0 22 18" className="w-[20px] h-[18px]"><g fill="none" stroke="#ddd" strokeWidth="1"><path d="M1 17C3 8 10 2 20 1M6 17c2-6 7-10 14-11M11 17c1-3 4-6 9-6" /></g><circle cx="19" cy="16" r="1.800" fill="#fff" /></svg></div>
      <div className="w-[28px] flex justify-center"><svg viewBox="0 0 22 18" className="w-[22px] h-[18px]"><path d="M1 6h4l5-5v16l-5-5H1z" fill="none" stroke="#ddd" /><path d="M13 6c1 2 1 4 0 6M16 4c2 3 2 7 0 10M19 2c3 4 3 10 0 14" fill="none" stroke="#888" /></svg></div>
      <div className="w-[80px] flex justify-center"><svg viewBox="0 0 22 22" className="w-[22px] h-[22px]"><path d="M7 20c-4 1-6-1-4-4l8-12c2-3 6-1 4 2l-8 12M12 8l7 2" fill="none" stroke="#ddd" strokeWidth="1.300" /></svg></div>
      <div className="w-[32px] flex justify-center text-[16px] tracking-[0.6px]">ESP</div>
      <div className="w-[136px] flex flex-col items-center leading-[28px] text-[17px] tracking-[0.4px]">
        <span>8:47 AM</span>
        <span>2018-08-31</span>
      </div>
      <div className="w-[40px] flex justify-center"><svg viewBox="0 0 24 20" className="w-[24px] h-[20px]"><path d="M.7.700h22.600v15H16l-4 3.500-4-3.500H.7z" fill="none" stroke="#fff" strokeWidth="1.300" /></svg></div>
      <div className="w-[23px]" />
      <div className="w-[2px] h-full bg-[#555] mr-[5px]" />
    </div>
  </div>
)

export default function App() {
  return (
    <div className="relative w-[1920px] h-[1080px] overflow-hidden font-['Noto_Sans',sans-serif] bg-[#f5f5f5]">
      <Back />
      <ProjectSettings />
      <Dialog />
      <Taskbar />
    </div>
  )
}
